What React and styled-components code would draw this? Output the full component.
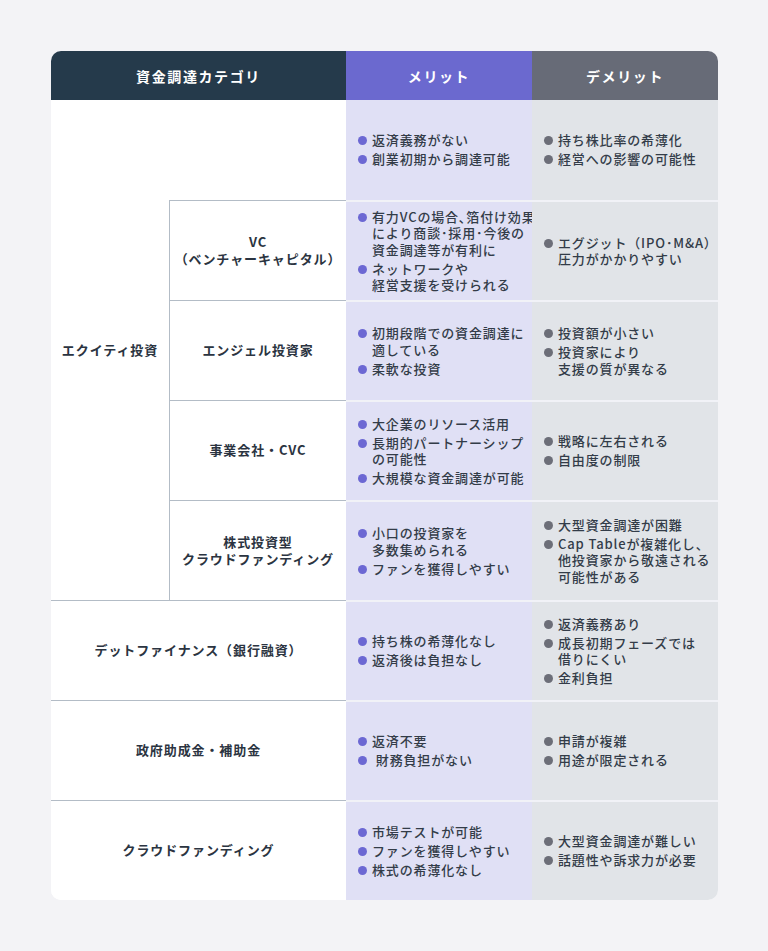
import React from 'react'
import styled, { createGlobalStyle } from 'styled-components'

const GlobalStyle = createGlobalStyle`
  html, body {
    margin: 0;
    padding: 0;
    background: #f3f3f6;
  }
  body {
    font-family: "Noto Sans CJK JP", "Noto Sans", sans-serif;
    color: #2b3441;
  }
`

const rows = [
  {
    merit: ['返済義務がない', '創業初期から調達可能'],
    demerit: ['持ち株比率の希薄化', '経営への影響の可能性'],
  },
  {
    sub: ['VC', '（ベンチャーキャピタル）'],
    merit: [
      ['有力VCの場合､箔付け効果', 'により商談･採用･今後の', '資金調達等が有利に'],
      ['ネットワークや', '経営支援を受けられる'],
    ],
    demerit: [['エグジット（IPO･M&A）', '圧力がかかりやすい']],
  },
  {
    sub: ['エンジェル投資家'],
    merit: [['初期段階での資金調達に', '適している'], '柔軟な投資'],
    demerit: ['投資額が小さい', ['投資家により', '支援の質が異なる']],
  },
  {
    sub: ['事業会社・CVC'],
    merit: ['大企業のリソース活用', ['長期的パートナーシップ', 'の可能性'], '大規模な資金調達が可能'],
    demerit: ['戦略に左右される', '自由度の制限'],
  },
  {
    sub: ['株式投資型', 'クラウドファンディング'],
    merit: [['小口の投資家を', '多数集められる'], 'ファンを獲得しやすい'],
    demerit: ['大型資金調達が困難', ['Cap Tableが複雑化し、', '他投資家から敬遠される', '可能性がある']],
  },
]

const others = [
  {
    label: 'デットファイナンス（銀行融資）',
    merit: ['持ち株の希薄化なし', '返済後は負担なし'],
    demerit: ['返済義務あり', ['成長初期フェーズでは', '借りにくい'], '金利負担'],
  },
  {
    label: '政府助成金・補助金',
    merit: ['返済不要', ' 財務負担がない'],
    demerit: ['申請が複雑', '用途が限定される'],
  },
  {
    label: 'クラウドファンディング',
    merit: ['市場テストが可能', 'ファンを獲得しやすい', '株式の希薄化なし'],
    demerit: ['大型資金調達が難しい', '話題性や訴求力が必要'],
  },
]

const Lines = ({ lines }) =>
  [].concat(lines).map((l, i) => (
    <React.Fragment key={i}>
      {i > 0 && <br />}
      {l}
    </React.Fragment>
  ))

const Points = ({ items, tone, first }) => (
  <PointCell $tone={tone} $first={first}>
    <PointList>
      {items.map((item, i) => (
        <Point key={i} $tone={tone}>
          <span>
            <Lines lines={item} />
          </span>
        </Point>
      ))}
    </PointList>
  </PointCell>
)

export default function App() {
  return (
    <Page>
      <GlobalStyle />
      <Table>
        <HeadCell $bg="#253a4b" $span={2}>資金調達カテゴリ</HeadCell>
        <HeadCell $bg="#6b69cf">メリット</HeadCell>
        <HeadCell $bg="#676b77">デメリット</HeadCell>

        <CategoryCell $rows={5}>エクイティ投資</CategoryCell>
        {rows.map((row, i) => (
          <React.Fragment key={i}>
            {row.sub ? (
              <CategoryCell $sub>
                <span>
                  <Lines lines={row.sub} />
                </span>
              </CategoryCell>
            ) : (
              <BlankCell />
            )}
            <Points items={row.merit} tone="merit" first={i === 0} />
            <Points items={row.demerit} tone="demerit" first={i === 0} />
          </React.Fragment>
        ))}

        {others.map((row, i) => (
          <React.Fragment key={i}>
            <CategoryCell $span={2} $line>
              {row.label}
            </CategoryCell>
            <Points items={row.merit} tone="merit" />
            <Points items={row.demerit} tone="demerit" />
          </React.Fragment>
        ))}
      </Table>
    </Page>
  )
}

const Page = styled.div`
  padding: 51px 50px 51px 51px;
`

const Table = styled.div`
  display: grid;
  grid-template-columns: 118px 177px 186px 186px;
  grid-template-rows: 49px repeat(8, 100px);
  border-radius: 10px;
  overflow: hidden;
  background: #ffffff;
`

const HeadCell = styled.div`
  grid-column: span ${(p) => p.$span || 1};
  background: ${(p) => p.$bg};
  color: #ffffff;
  font-size: 14px;
  font-weight: 700;
  letter-spacing: 1.6px;
  display: flex;
  align-items: center;
  justify-content: center;
`

const CategoryCell = styled.div`
  grid-column: span ${(p) => p.$span || 1};
  grid-row: span ${(p) => p.$rows || 1};
  box-sizing: border-box;
  display: flex;
  align-items: center;
  justify-content: center;
  text-align: center;
  font-size: 13px;
  font-weight: 700;
  letter-spacing: 0.9px;
  line-height: 16.5px;
  color: #2b3441;
  background: #ffffff;
  border-top: ${(p) => (p.$sub || p.$line ? '1px solid #b3bcc6' : 'none')};
  border-left: ${(p) => (p.$sub ? '1px solid #b3bcc6' : 'none')};
`

const BlankCell = styled.div`
  background: #ffffff;
`

const PointCell = styled.div`
  box-sizing: border-box;
  display: flex;
  align-items: center;
  padding: 0 4px 0 12px;
  background: ${(p) => (p.$tone === 'merit' ? '#e0e0f5' : '#e1e4e8')};
  border-top: ${(p) => (p.$first ? 'none' : '2px solid #f1f2f7')};
`

const PointList = styled.ul`
  list-style: none;
  margin: 0;
  padding: 0;
  display: flex;
  flex-direction: column;
  gap: 2.5px;
`

const Point = styled.li`
  display: flex;
  align-items: flex-start;
  gap: 5px;
  font-size: 13px;
  font-weight: 500;
  letter-spacing: 0.85px;
  line-height: 16.5px;
  color: #333c48;
  white-space: pre;

  &::before {
    content: '';
    flex: none;
    width: 9px;
    height: 9px;
    margin-top: 4px;
    border-radius: 50%;
    background: ${(p) => (p.$tone === 'merit' ? '#6c68d3' : '#6c6e78')};
  }
`
